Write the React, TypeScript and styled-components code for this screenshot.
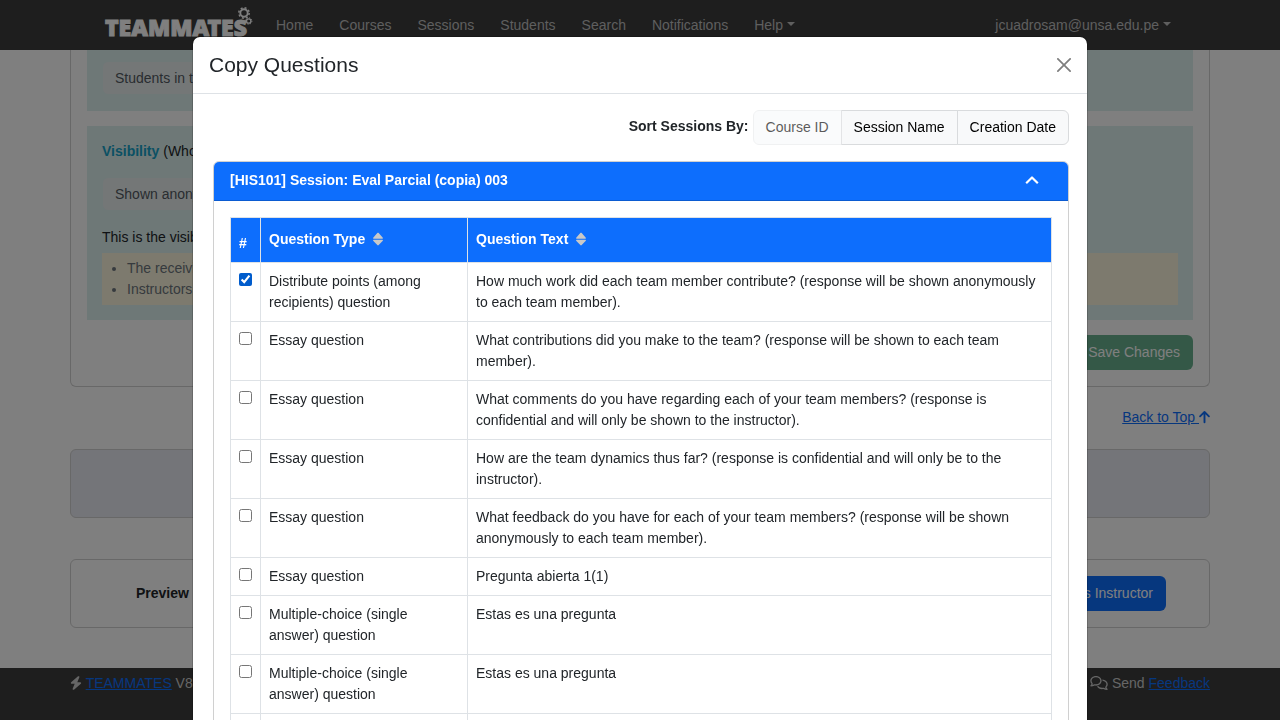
import React, { useState } from 'react';
import styled, { createGlobalStyle, css } from 'styled-components';
import { FaBolt, FaRegComments } from 'react-icons/fa6';

const GlobalStyle = createGlobalStyle`
  *, *::before, *::after { box-sizing: border-box; }
  body {
    margin: 0;
    background: #fff;
    color: #212529;
    font-family: "Liberation Sans", Arial, sans-serif;
    font-size: 14px;
    line-height: 21px;
    overflow: hidden;
  }
  button, select, input { font: inherit; }
  a { color: #0d6efd; }
`;

const Page = styled.div`
  display: flex;
  flex-direction: column;
  height: 100vh;
  overflow: hidden;
`;

const container = css`
  width: 100%;
  max-width: 1140px;
  margin: 0 auto;
`;

const NavBar = styled.nav`
  background: #3c3c3c;
  flex: none;
`;

const NavInner = styled.div`
  ${container}
  display: flex;
  align-items: center;
  height: 50px;
  padding: 0 39px 0 35px;
`;

const Brand = styled.a`
  position: relative;
  width: 145px;
  padding-top: 4px;
  color: #fff;
  font-family: "Noto Sans", sans-serif;
  font-weight: 900;
  font-size: 23px;
  line-height: 50px;
  text-decoration: none;
  -webkit-text-stroke: 1px;
  margin-right: 26px;

  svg {
    position: absolute;
    top: 8px;
    right: -3px;
  }
`;

const NavList = styled.div`
  display: flex;
  flex: 1;
  gap: 26px;
`;

const NavLink = styled.a`
  color: #bebebe;
  text-decoration: none;
`;

const MenuButton = styled.button`
  display: flex;
  align-items: center;
  gap: 4px;
  padding: 0;
  border: 0;
  background: none;
  color: #bebebe;

  &::after {
    content: "";
    margin-bottom: 2px;
    border-top: 4px solid;
    border-left: 4px solid transparent;
    border-right: 4px solid transparent;
  }
`;

const Main = styled.main`
  ${container}
  flex: none;
`;

const Card = styled.section<{ $tinted?: boolean }>`
  display: flex;
  align-items: center;
  justify-content: space-between;
  min-height: 69px;
  padding: 16px 43px 16px 65px;
  border: 1px solid #d0d0d0;
  border-radius: 6px;
  background: ${p => (p.$tinted ? '#e9ebf2' : '#fff')};
`;

const QuestionCard = styled.section`
  display: flex;
  flex-direction: column;
  gap: 15px;
  padding: 0 16px 16px;
  border: 1px solid #d0d0d0;
  border-top: 0;
  border-radius: 0 0 6px 6px;
`;

const Panel = styled.div`
  padding: 15px;
  background: #dcf0ee;
`;

const FeedbackPathPanel = styled(Panel)`
  padding-top: 11px;
  padding-bottom: 16px;
`;

const Select = styled.select`
  display: block;
  width: 50%;
  height: 34px;
  padding: 0 12px;
  border: 1px solid #dcf0ee;
  border-radius: 6px;
  appearance: none;
  background: #e9efef;
  color: #525a62;
  opacity: 1;
`;

const PanelText = styled.p`
  margin: 0;
`;

const VisibilityName = styled.b`
  color: #17a2c8;
`;

const VisibilityPanel = styled(Panel)`
  ${Select} { margin: 15px 0 16px; }
`;

const Hints = styled.ul`
  margin: 5px 0 0;
  padding: 5px 0 5px 25px;
  background: #fbf4dc;
  color: #6c757d;
`;

const Solid = styled.button<{ $tone: 'success' | 'primary' }>`
  height: 35px;
  padding: 0 13px;
  border: 0;
  border-radius: 6px;
  color: #fff;
  background: ${p => (p.$tone === 'success' ? '#198754' : '#0d6efd')};

  &:disabled { opacity: 0.65; }
`;

const Actions = styled.div`
  display: flex;
  justify-content: flex-end;
`;

const BackToTop = styled.div`
  padding: 20px 0 21px;
  text-align: right;

  svg { vertical-align: -2px; }
`;

const Gap = styled.div`
  height: 41px;
`;

const Footer = styled.footer`
  flex: 1 0 auto;
  margin-top: 40px;
  background: #3c3c3c;
  color: #ccc;
`;

const FooterInner = styled.div`
  ${container}
  display: flex;
  justify-content: space-between;
  padding-top: 5px;
`;

const BoltIcon = styled(FaBolt)`
  width: 12px;
  height: 14px;
  vertical-align: -2px;
`;

const CommentsIcon = styled(FaRegComments)`
  width: 18px;
  height: 14px;
  vertical-align: -2px;
`;

const Backdrop = styled.div`
  position: fixed;
  inset: 0;
  overflow: hidden;
  background: rgba(0, 0, 0, 0.5);
`;

const Modal = styled.div`
  width: 70%;
  margin: 36px auto;
  border: 1px solid rgba(0, 0, 0, 0.175);
  border-radius: 8px;
  background: #fff;
  background-clip: padding-box;
`;

const ModalHeader = styled.header`
  display: flex;
  align-items: center;
  justify-content: space-between;
  padding: 16px;
  border-bottom: 1px solid #dee2e6;
`;

const ModalTitle = styled.h5`
  margin: 0;
  font-size: 21px;
  font-weight: 400;
  line-height: 24px;
`;

const CloseButton = styled.button`
  display: flex;
  padding: 0;
  border: 0;
  background: none;
  color: #000;
  opacity: 0.5;
`;

const ModalBody = styled.div`
  padding: 16px 18px 16px 20px;
`;

const SortBar = styled.div`
  display: flex;
  justify-content: flex-end;
  gap: 4px;
  margin-bottom: 16px;
`;

const SortLabel = styled.b`
  line-height: 33px;
`;

const ButtonGroup = styled.div`
  display: flex;
`;

const SortOption = styled.button`
  height: 35px;
  padding: 0 12px;
  border: 1px solid #d9dbdd;
  background: #f8f9fa;
  color: #000;

  & + & { margin-left: -1px; }
  &:first-child { border-radius: 6px 0 0 6px; }
  &:last-child { border-radius: 0 6px 6px 0; }
  &:disabled { opacity: 0.65; border-color: #e8eaec; }
`;

const SessionCard = styled.section`
  border: 1px solid #d0d0d0;
  border-radius: 6px;
`;

const SessionHeader = styled.button`
  display: flex;
  align-items: center;
  justify-content: space-between;
  width: 100%;
  height: 39px;
  padding: 0 29px 2px 16px;
  border: 0;
  border-bottom: 1px solid #0b5bd1;
  border-radius: 5px 5px 0 0;
  background: #0d6efd;
  color: #fff;
  font-weight: 700;
`;

const SessionBody = styled.div`
  padding: 16px;
`;

const Table = styled.table`
  width: 100%;
  border-collapse: collapse;
  table-layout: fixed;

  th, td {
    padding: 8px;
    border: 1px solid #dee2e6;
    text-align: left;
    vertical-align: top;
  }
  th {
    background: #0d6efd;
    color: #fff;
    vertical-align: bottom;
  }
`;

const NumberCol = styled.col`
  width: 30px;
`;

const TypeCol = styled.col`
  width: 207px;
`;

const SortHeader = styled.button`
  display: flex;
  align-items: center;
  gap: 8px;
  height: 28px;
  padding: 0 0 2px;
  border: 0;
  background: none;
  color: #fff;
  font-weight: 700;

  svg { color: #c8c8c8; }
`;

const Check = styled.input`
  width: 13px;
  height: 13px;
  margin: 0;
  accent-color: #005ccc;
`;

const Gears = () => (
  <svg width="16" height="20" viewBox="0 0 16 20" fill="none" stroke="currentColor" aria-hidden="true">
    <circle cx="7" cy="7" r="3.7" strokeWidth="1.9" />
    <circle cx="7" cy="7" r="5.2" strokeWidth="1.5" strokeDasharray="2 2.08" />
    <circle cx="11.7" cy="15" r="2.2" strokeWidth="1.3" />
    <circle cx="11.7" cy="15" r="3.2" strokeWidth="1" strokeDasharray="1.25 1.26" />
  </svg>
);

const CloseIcon = () => (
  <svg width="14" height="14" viewBox="0 0 16 16" fill="currentColor" aria-hidden="true">
    <path d="M.293.293a1 1 0 0 1 1.414 0L8 6.586 14.293.293a1 1 0 1 1 1.414 1.414L9.414 8l6.293 6.293a1 1 0 0 1-1.414 1.414L8 9.414l-6.293 6.293a1 1 0 0 1-1.414-1.414L6.586 8 .293 1.707a1 1 0 0 1 0-1.414z" />
  </svg>
);

const SortIcon = () => (
  <svg width="10" height="14" viewBox="0 0 10 14" fill="currentColor" aria-hidden="true">
    <path d="M.6 6.7C-.1 6.7 0 5.9.4 5.5L4.3 1.1c.4-.4 1-.4 1.4 0l3.9 4.4c.4.4.5 1.2-.2 1.2zM.6 7.7C-.1 7.7 0 8.5.4 8.9l3.9 4.2c.4.4 1 .4 1.4 0l3.9-4.2c.4-.4.5-1.2-.2-1.2z" />
  </svg>
);

const ChevronIcon = () => (
  <svg width="14" height="14" viewBox="0 0 14 14" fill="none" stroke="currentColor" strokeWidth="2.2" strokeLinejoin="round" aria-hidden="true">
    <path d="M1.2 10.2 7 4.5l5.8 5.7" />
  </svg>
);

const ArrowIcon = () => (
  <svg width="11" height="14" viewBox="0 0 11 14" fill="none" stroke="currentColor" strokeWidth="1.9" strokeLinecap="round" strokeLinejoin="round" aria-hidden="true">
    <path d="M5.5 12.3V2M1.1 6.3l4.4-4.4 4.4 4.4" />
  </svg>
);

const navItems = ['Home', 'Courses', 'Sessions', 'Students', 'Search', 'Notifications'];
const sortOptions = ['Course ID', 'Session Name', 'Creation Date'];

const ESSAY = 'Essay question';
const MCQ = 'Multiple-choice (single answer) question';

const questions = [
  { type: 'Distribute points (among recipients) question', text: 'How much work did each team member contribute? (response will be shown anonymously to each team member).' },
  { type: ESSAY, text: 'What contributions did you make to the team? (response will be shown to each team member).' },
  { type: ESSAY, text: 'What comments do you have regarding each of your team members? (response is confidential and will only be shown to the instructor).' },
  { type: ESSAY, text: 'How are the team dynamics thus far? (response is confidential and will only be to the instructor).' },
  { type: ESSAY, text: 'What feedback do you have for each of your team members? (response will be shown anonymously to each team member).' },
  { type: ESSAY, text: 'Pregunta abierta 1(1)' },
  { type: MCQ, text: 'Estas es una pregunta' },
  { type: MCQ, text: 'Estas es una pregunta' },
  { type: MCQ, text: 'Estas es una pregunta' },
];

export default function App() {
  const [sortBy, setSortBy] = useState('Course ID');
  const [selected, setSelected] = useState<number[]>([0]);

  const toggle = (index: number) =>
    setSelected(s => (s.includes(index) ? s.filter(i => i !== index) : [...s, index]));

  return (
    <>
      <GlobalStyle />
      <Page>
        <NavBar>
          <NavInner>
            <Brand href="#">TEAMMATES<Gears /></Brand>
            <NavList>
              {navItems.map(item => <NavLink key={item} href="#">{item}</NavLink>)}
              <MenuButton>Help</MenuButton>
            </NavList>
            <MenuButton>jcuadrosam@unsa.edu.pe</MenuButton>
          </NavInner>
        </NavBar>
        <Main>
          <QuestionCard>
            <FeedbackPathPanel>
              <Select disabled aria-label="Feedback path"><option>Students in this course</option></Select>
            </FeedbackPathPanel>
            <VisibilityPanel>
              <PanelText><VisibilityName>Visibility</VisibilityName> (Who can see the responses?)</PanelText>
              <Select disabled aria-label="Visibility"><option>Shown anonymously</option></Select>
              <PanelText>This is the visibility</PanelText>
              <Hints>
                <li>The receiving students</li>
                <li>Instructors in this course</li>
              </Hints>
            </VisibilityPanel>
            <Actions><Solid $tone="success" disabled>Save Changes</Solid></Actions>
          </QuestionCard>
          <BackToTop><a href="#">Back to Top <ArrowIcon /></a></BackToTop>
          <Card $tinted />
          <Gap />
          <Card>
            <b>Preview</b>
            <Solid $tone="primary">Preview as Instructor</Solid>
          </Card>
        </Main>
        <Footer>
          <FooterInner>
            <span><BoltIcon /> <a href="#">TEAMMATES</a> V8.0.0</span>
            <span><CommentsIcon /> Send <a href="#">Feedback</a></span>
          </FooterInner>
        </Footer>
      </Page>

      <Backdrop>
        <Modal role="dialog" aria-labelledby="copy-title">
          <ModalHeader>
            <ModalTitle id="copy-title">Copy Questions</ModalTitle>
            <CloseButton aria-label="Close"><CloseIcon /></CloseButton>
          </ModalHeader>
          <ModalBody>
            <SortBar>
              <SortLabel>Sort Sessions By:</SortLabel>
              <ButtonGroup>
                {sortOptions.map(option => (
                  <SortOption key={option} disabled={option === sortBy} onClick={() => setSortBy(option)}>
                    {option}
                  </SortOption>
                ))}
              </ButtonGroup>
            </SortBar>
            <SessionCard>
              <SessionHeader>
                <span>[HIS101] Session: Eval Parcial (copia) 003</span>
                <ChevronIcon />
              </SessionHeader>
              <SessionBody>
                <Table>
                  <colgroup><NumberCol /><TypeCol /><col /></colgroup>
                  <thead>
                    <tr>
                      <th>#</th>
                      <th><SortHeader>Question Type <SortIcon /></SortHeader></th>
                      <th><SortHeader>Question Text <SortIcon /></SortHeader></th>
                    </tr>
                  </thead>
                  <tbody>
                    {questions.map((q, i) => (
                      <tr key={i}>
                        <td>
                          <Check
                            type="checkbox"
                            aria-label={q.text}
                            checked={selected.includes(i)}
                            onChange={() => toggle(i)}
                          />
                        </td>
                        <td>{q.type}</td>
                        <td>{q.text}</td>
                      </tr>
                    ))}
                  </tbody>
                </Table>
              </SessionBody>
            </SessionCard>
          </ModalBody>
        </Modal>
      </Backdrop>
    </>
  );
}
